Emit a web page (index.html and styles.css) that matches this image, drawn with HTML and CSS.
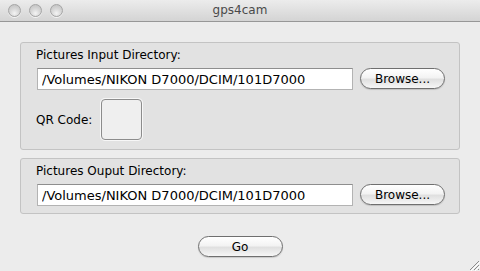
FILE: index.html
```html
<!DOCTYPE html>
<html lang="en">
<head>
    <meta charset="UTF-8">
    <meta name="viewport" content="width=device-width, initial-scale=1.0">
    <title>gps4cam</title>
    <link rel="stylesheet" href="styles.css">
</head>
<body>
    <div class="window">
        <!-- title bar -->
        <div class="titlebar">
            <div class="lights">
                <span class="light"></span>
                <span class="light"></span>
                <span class="light"></span>
            </div>
            <div class="title">gps4cam</div>
        </div>
        <div class="content">
            <div class="group group-input">
                <div class="group-label">Pictures Input Directory:</div>
                <div class="path-row">
                    <input type="text" class="path" value="/Volumes/NIKON D7000/DCIM/101D7000">
                    <button class="push">Browse...</button>
                </div>
                <div class="qr-row">
                    <span class="qr-label">QR Code:</span>
                    <div class="qr-well"></div>
                </div>
            </div>
            <div class="group group-output">
                <div class="group-label">Pictures Ouput Directory:</div>
                <div class="path-row">
                    <input type="text" class="path" value="/Volumes/NIKON D7000/DCIM/101D7000">
                    <button class="push">Browse...</button>
                </div>
            </div>
            <div class="actions">
                <button class="push go">Go</button>
            </div>
        </div>
        <svg class="grip" width="12" height="12" viewBox="0 0 12 12">
            <path d="M11 2 L2 11 M11 6 L6 11 M11 10 L10 11" stroke="#8a8a8a" stroke-width="1"/>
            <path d="M12 3 L3 12 M12 7 L7 12" stroke="#ffffff" stroke-width="1"/>
        </svg>
    </div>
</body>
</html>
```

FILE: styles.css
```css
body {
    margin: 0;
    font-family: "DejaVu Sans", "Liberation Sans", sans-serif;
    font-size: 12px;
    color: #000;
    background: #ececec;
}
.window {
    position: relative;
    width: 480px;
    height: 271px;
    background: #ececec;
    overflow: hidden;
}
.titlebar {
    position: relative;
    height: 21px;
    border-bottom: 1px solid #979797;
    background: linear-gradient(#ececec, #d4d4d4);
    border-radius: 4px 4px 0 0;
}
.lights {
    display: flex;
    gap: 8px;
    padding: 4px 0 0 8px;
}
.light {
    width: 11px;
    height: 11px;
    border-radius: 50%;
    border: 1px solid #a5a5a5;
    background: radial-gradient(circle at 50% 75%, #f4f4f4 0, #d8d8d8 45%, #bdbdbd 100%);
    box-shadow: 0 1px 0 rgba(255,255,255,0.7);
}
.title {
    position: absolute;
    left: 0;
    right: 0;
    top: 3px;
    text-align: center;
    font-size: 12px;
    color: #4a4a4a;
}
.content {
    padding: 20px 20px 0 20px;
}
.group {
    background: #e2e2e2;
    border: 1px solid #c3c3c3;
    border-radius: 3px;
    padding: 4px 14px 8px 15px;
}
.group-output {
    margin-top: 8px;
    padding-bottom: 7px;
}
.group-label {
    height: 16px;
    line-height: 16px;
}
.path-row {
    display: flex;
    align-items: flex-start;
    margin-top: 5px;
    padding-left: 1px;
}
.path {
    width: 316px;
    height: 22px;
    box-sizing: border-box;
    margin: 0;
    padding: 1px 4px 0 4px;
    border: 1px solid #b3b3b3;
    border-top-color: #8e8e8e;
    background: #fff;
    font-family: "DejaVu Sans", "Liberation Sans", sans-serif;
    font-size: 13px;
    color: #000;
    outline: none;
}
.push {
    height: 21px;
    box-sizing: border-box;
    padding: 0;
    border: 1px solid #6f6f6f;
    border-radius: 11px;
    background: linear-gradient(#ffffff 0, #f3f3f3 45%, #e0e0e0 55%, #f6f6f6 100%);
    box-shadow: 0 1px 1px rgba(0,0,0,0.15);
    font-family: "DejaVu Sans", "Liberation Sans", sans-serif;
    font-size: 12px;
    color: #000;
    cursor: pointer;
}
.path-row .push {
    width: 85px;
    margin-left: 7px;
}
.qr-row {
    display: flex;
    align-items: center;
    margin-top: 8px;
    height: 43px;
}
.qr-label {
    width: 65px;
}
.qr-well {
    width: 39px;
    height: 39px;
    border: 1px solid #8c8c8c;
    border-radius: 4px;
    background: #efefef;
    box-shadow: 0 0 0 1px #f7f7f7;
}
.actions {
    display: flex;
    justify-content: center;
    margin-top: 22px;
}
.go {
    width: 85px;
    height: 21px;
}
.grip {
    position: absolute;
    right: 0;
    bottom: 0;
}
```
